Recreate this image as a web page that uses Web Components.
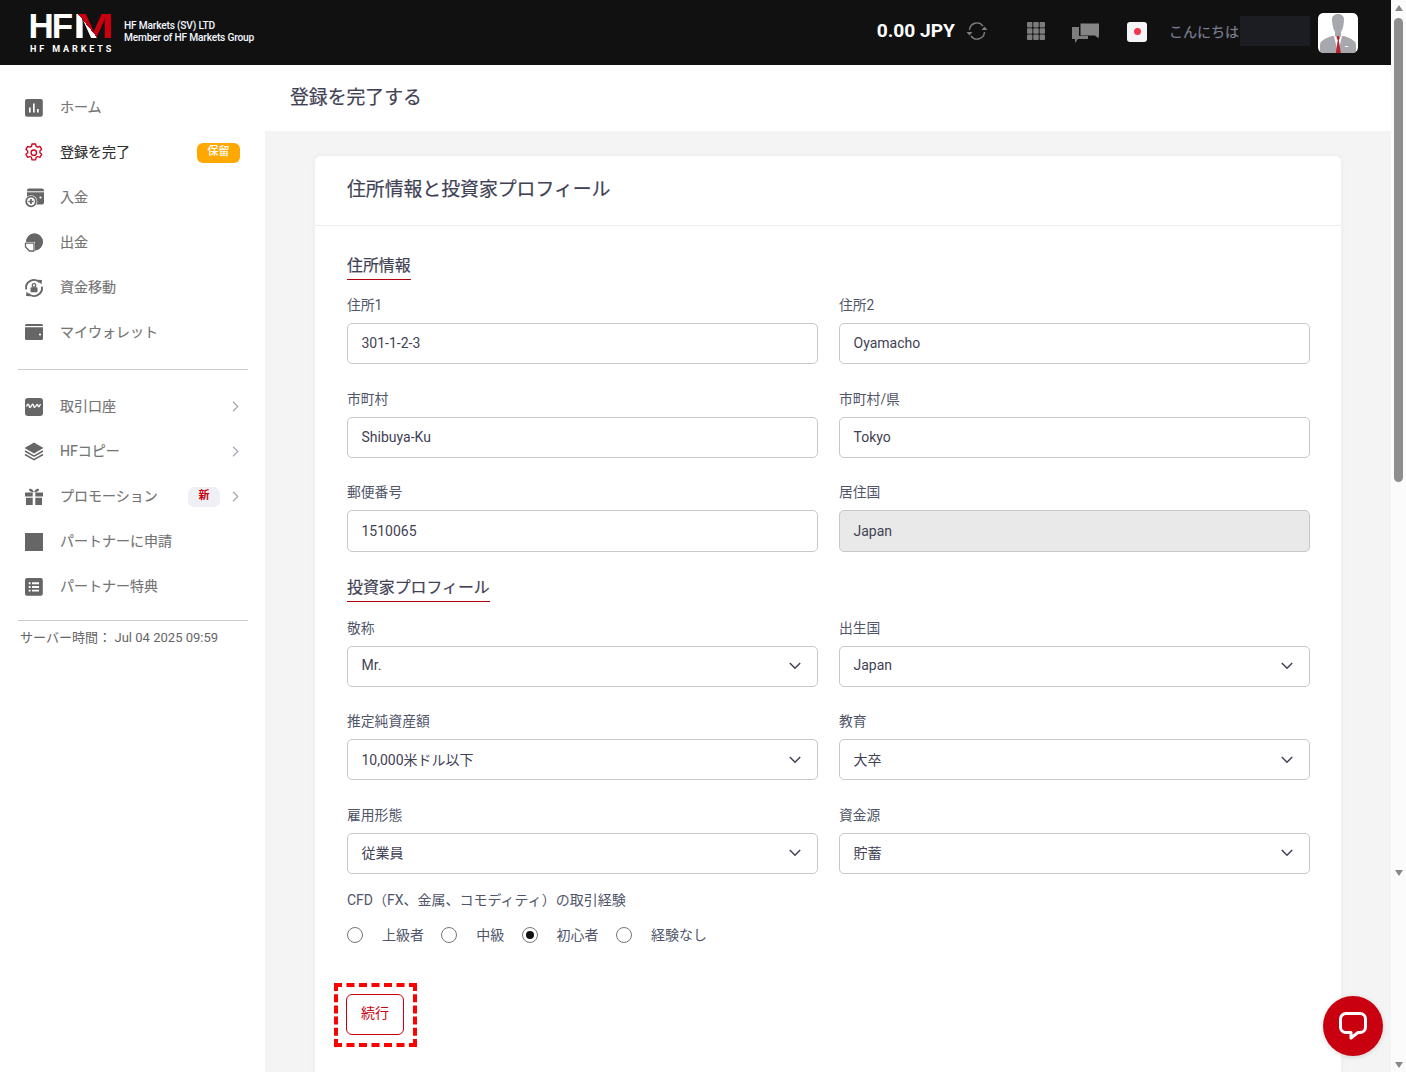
<!DOCTYPE html>
<html lang="ja">
<head>
<meta charset="utf-8">
<title>HFM</title>
<style>
  html, body { margin: 0; height: 1072px; overflow: hidden; }
  body { font-family: Roboto, "Noto Sans CJK JP", sans-serif; font-size: 14px; color: #3f4254; }
  #app { display: flex; width: 1406px; height: 1072px; overflow: hidden; }
  #main { width: 1391px; display: flex; flex-direction: column; }
  #columns { display: flex; flex: 1; min-height: 0; }
</style>
</head>
<body>
<div id="app">
  <div id="main">
    <hf-topbar></hf-topbar>
    <div id="columns">
      <hf-sidenav></hf-sidenav>
      <hf-content>
        <hf-section-title>住所情報</hf-section-title>
        <hf-form-grid>
          <hf-field label="住所1" value="301-1-2-3"></hf-field>
          <hf-field label="住所2" value="Oyamacho"></hf-field>
          <hf-field label="市町村" value="Shibuya-Ku"></hf-field>
          <hf-field label="市町村/県" value="Tokyo"></hf-field>
          <hf-field label="郵便番号" value="1510065"></hf-field>
          <hf-field label="居住国" value="Japan" disabled></hf-field>
        </hf-form-grid>
        <hf-section-title>投資家プロフィール</hf-section-title>
        <hf-form-grid>
          <hf-field label="敬称" value="Mr." select></hf-field>
          <hf-field label="出生国" value="Japan" select></hf-field>
          <hf-field label="推定純資産額" value="10,000米ドル以下" select></hf-field>
          <hf-field label="教育" value="大卒" select></hf-field>
          <hf-field label="雇用形態" value="従業員" select></hf-field>
          <hf-field label="資金源" value="貯蓄" select></hf-field>
        </hf-form-grid>
        <hf-radio-group label="CFD（FX、金属、コモディティ）の取引経験" options="上級者,中級,初心者,経験なし" checked="初心者"></hf-radio-group>
        <hf-submit>続行</hf-submit>
      </hf-content>
    </div>
  </div>
  <hf-scrollbar></hf-scrollbar>
</div>
<hf-chat></hf-chat>

<script>
const ICONS = {
  home: '<rect x="1" y="1" width="17.800" height="17.800" rx="2" fill="#666"/><path d="M5 14.500V9.500h1.700v5zM9 14.500V5.500h1.700v9zM13 14.500v-3.500h1.700v3.500z" fill="#fff"/>',
  gear: '<path d="M8 1h3.600l.5 2.300 1.600.8 2.200-.8 1.800 3-1.800 1.600v1.800l1.800 1.600-1.800 3-2.200-.8-1.600.8-.5 2.500H8l-.5-2.500-1.600-.8-2.200.8-1.800-3 1.800-1.600V7.900L1.900 6.300l1.800-3 2.200.8 1.600-.8z" fill="none" stroke="#d0021b" stroke-width="1.300" stroke-linejoin="round"/><circle cx="9.800" cy="9.700" r="2.700" fill="none" stroke="#d0021b" stroke-width="1.300"/>',
  deposit: '<rect x="3" y=".5" width="17" height="16" rx="2" fill="#666"/><path d="M3 3.800h17" stroke="#fff" stroke-width="1"/><circle cx="16.500" cy="9.500" r="1.100" fill="#fff"/><circle cx="7" cy="13.500" r="6.300" fill="#fff"/><circle cx="7" cy="13.500" r="4.800" fill="#fff" stroke="#666" stroke-width="1.800"/><path d="M4.400 13.500h5.200M7 10.900v5.200" stroke="#666" stroke-width="1.700"/>',
  withdraw: '<circle cx="10.500" cy="9" r="8.500" fill="#666"/><path d="M0 8.800h11V19H0z" fill="#fff"/><path d="M10 10.200v7.800H5.500L1.500 14v-3.800z" fill="#fff" stroke="#666" stroke-width="1.300" stroke-linejoin="round"/><path d="M11 9.800V17.400A8.500 8.500 0 0 0 11 .5 8.500 8.500 0 0 0 2.100 8.800H11z" fill="#666"/>',
  transfer: '<path d="M15.700 4.400A8 8 0 0 0 2.100 11.300M4.300 15.600A8 8 0 0 0 17.900 8.700" fill="none" stroke="#666" stroke-width="1.900"/><path d="M13.500 1.800 18 2l-.6 4.600zM6.500 18.200 2 18l.6-4.600z" fill="#666"/><circle cx="10" cy="7.400" r="1.800" fill="none" stroke="#666" stroke-width="1.300"/><rect x="6.500" y="9.200" width="7" height="5" rx=".8" fill="#666"/>',
  wallet: '<path d="M2.500 1h15A1.500 1.500 0 0 1 19 2.500V3H1v-.5A1.500 1.500 0 0 1 2.500 1z" fill="#666"/><path d="M1 4.300h18v11.200a1.500 1.500 0 0 1-1.500 1.500h-15A1.500 1.500 0 0 1 1 15.500z" fill="#666"/><circle cx="16" cy="11.500" r="1.100" fill="#fff"/>',
  trading: '<rect x="1" y="1" width="18" height="18" rx="3" fill="#666"/><path d="M2.500 9.500c.8-2.500 2-3 2.500-1s.8 2.800 2 .8 1.800-3 2.500-.8.800 2.800 2 1 1.800-3 2.500-1 1 1.500 2.500-1.500" fill="none" stroke="#fff" stroke-width="1.300"/>',
  layers: '<path d="M10 .5 19.500 6 10 11.500.5 6z" fill="#666"/><path d="m1 9 9 5.200L19 9M1 12.500l9 5.200 9-5.200" fill="none" stroke="#666" stroke-width="1.500"/>',
  gift: '<path d="M1 5.500h7.700v4H1zM11.300 5.500H19v4h-7.700zM2 10.700h6.700V18H2zM11.300 10.700H18V18h-6.700z" fill="#666"/><path d="M10 5.200C7.300 5.200 5 4.500 5 2.800S8.300.8 10 5.200zM10 5.200c2.700 0 5-.7 5-2.400S11.700.8 10 5.200z" fill="#666"/>',
  square: '<rect x="1" y="1" width="18" height="18" fill="#666"/>',
  list: '<rect x="1" y="1" width="17.800" height="17.800" rx="2" fill="#666"/><path d="M4.700 5.300h1.900v1.900H4.700zM8 5.300h7v1.900H8zM4.700 9h1.900v1.900H4.700zM8 9h7v1.900H8zM4.700 12.700h1.900v1.900H4.700zM8 12.700h7v1.900H8z" fill="#fff"/>'
};

class HfTopbar extends HTMLElement {
  connectedCallback() {
    this.attachShadow({ mode: 'open' });
    this.shadowRoot.innerHTML = `
    <style>
      :host { display: flex; align-items: center; height: 65px; background: #111; color: #fff; padding: 0 33px 0 30px; box-sizing: border-box; flex: none; }
      .logo { width: 94px; display: flex; flex-direction: column; margin-top: 1px; }
      .mark { font: 700 35px/30px "Liberation Sans", sans-serif; height: 30px; margin-left: -1.500px; white-space: nowrap; display: flex; }
      .mark span { letter-spacing: -2px; }
      .mark b { display: block; width: 29px; height: 30px; margin-left: 2px; transform: scaleX(1.420); transform-origin: left center; background: linear-gradient(60deg, #fff 0 41%, #c8000f 41%); -webkit-background-clip: text; background-clip: text; color: transparent; }
      .sub { font: 700 9px/11px Roboto, sans-serif; letter-spacing: 2.900px; margin-top: 3px; white-space: nowrap; }
      .company { font: 500 10.200px/12px Roboto, sans-serif; letter-spacing: -.2px; margin-top: -1px; white-space: nowrap; color: #f4f8ff; }
      .right { margin-left: auto; display: flex; align-items: center; }
      .balance { font: 700 19.200px/1 Roboto, sans-serif; margin-bottom: 4px; white-space: nowrap; }
      .sync { margin-left: 11px; margin-bottom: 4px; }
      .apps { margin-left: 39px; margin-bottom: 4px; }
      .msg { margin-left: 27px; margin-top: 2px; }
      .flag { margin-left: 28px; width: 20px; height: 20px; margin-bottom: 2px; border-radius: 3px; background: #f5f5f7; display: flex; align-items: center; justify-content: center; }
      .flag i { width: 7px; height: 7px; border-radius: 50%; background: #f4364c; }
      .hello { margin-left: 22px; margin-bottom: 4px; font-size: 14px; color: #7a8094; white-space: nowrap; width: 71px; -webkit-text-stroke: .2px; }
      .mask { width: 70px; height: 30px; margin-bottom: 4px; background: #1b1d22; }
      .avatar { margin-left: 8px; width: 40px; height: 40px; border-radius: 5px; display: block; }
    </style>
    <div class="logo">
      <div class="mark"><span>HF</span><b>M</b></div>
      <div class="sub">HF MARKETS</div>
    </div>
    <div class="company">HF Markets (SV) LTD<br>Member of HF Markets Group</div>
    <div class="right">
      <div class="balance">0.00 JPY</div>
      <svg class="sync" width="22" height="22" viewBox="0 0 22 22" fill="none" stroke="#7d7d7d" stroke-width="1.400"><path d="M3.500 10a7.500 7.500 0 0 1 13.500-4M18.500 12a7.500 7.500 0 0 1-13.500 4"/><path d="M15.500 10h6l-3-3.500zM.5 12h6l-3 3.500z" fill="#7d7d7d" stroke="none"/></svg>
      <svg class="apps" width="18" height="18" viewBox="0 0 18 18" fill="#7d7d7d"><rect width="5.400" height="5.400" rx=".8"/><rect x="6.300" width="5.400" height="5.400" rx=".8"/><rect x="12.600" width="5.400" height="5.400" rx=".8"/><rect y="6.300" width="5.400" height="5.400" rx=".8"/><rect x="6.300" y="6.300" width="5.400" height="5.400" rx=".8"/><rect x="12.600" y="6.300" width="5.400" height="5.400" rx=".8"/><rect y="12.600" width="5.400" height="5.400" rx=".8"/><rect x="6.300" y="12.600" width="5.400" height="5.400" rx=".8"/><rect x="12.600" y="12.600" width="5.400" height="5.400" rx=".8"/></svg>
      <svg class="msg" width="27" height="21" viewBox="0 0 27 21"><path d="M0 4h16v12H6l-3 4v-4H0z" fill="#7d7d7d"/><path d="M7 0h20v13l-1 3-3.500-3H7z" fill="#111"/><path d="M8.500 .5H27v12.300l-.7 2.500-3.300-2.800H8.500z" fill="#858585"/></svg>
      <div class="flag"><i></i></div>
      <div class="hello">こんにちは</div>
      <div class="mask"></div>
      <svg class="avatar" viewBox="0 0 40 40"><rect width="40" height="40" rx="5" fill="#fff"/><path d="M2 40v-8c0-4 4-6 12-9h12c8 3 12 5 12 9v8z" fill="#a6a8ad"/><path d="M14 6c0-3 3-5 6-5s6 2 6 5c0 5-1 10-3 13v4h-6v-4c-2-3-3-8-3-13z" fill="#a6a8ad"/><path d="M16 23l4 17 4-17-4 1z" fill="#fff"/><path d="M18.700 23h2.600l.5 2.500-1 1.500 2 13h-5l2-13-1-1.500z" fill="#b8232f"/><rect x="27" y="33" width="3" height="1" fill="#fff"/></svg>
    </div>`;
  }
}

class HfNavItem extends HTMLElement {
  connectedCallback() {
    this.attachShadow({ mode: 'open' });
    const arrow = this.hasAttribute('arrow')
      ? '<svg class="arrow" width="7" height="11" viewBox="0 0 7 11" fill="none" stroke="#a5a8b3" stroke-width="1.200"><path d="m1 .8 4.800 4.700L1 10.200"/></svg>'
      : '';
    this.shadowRoot.innerHTML = `
    <style>
      :host { display: flex; align-items: center; height: 45px; padding: 0 26px 0 24px; box-sizing: border-box; color: #747474; font-size: 14px; }
      :host([active]) { color: #2e2e2e; }
      svg.icon { width: 20px; height: 20px; flex: none; margin: 3px 16px 0 0; overflow: visible; }
      .text { white-space: nowrap; flex: 1; padding-bottom: 2px; -webkit-text-stroke: .15px; }
      .arrow { flex: none; margin: 2px 0 0 12px; }
    </style>
    <svg class="icon" viewBox="0 0 20 20">${ICONS[this.getAttribute('icon')]}</svg>
    <span class="text">${this.getAttribute('label')}</span>
    <slot></slot>${arrow}`;
  }
}

class HfBadge extends HTMLElement {
  connectedCallback() {
    this.attachShadow({ mode: 'open' });
    this.shadowRoot.innerHTML = `
    <style>
      :host { display: flex; align-items: center; justify-content: center; height: 20px; border-radius: 6px; font-size: 11px; font-weight: 500; padding-bottom: 5px; margin: 2px -1px 0 0; box-sizing: border-box; background: #ffa800; color: #fff; width: 43px; }
      :host([kind="new"]) { background: #eef0f5; color: #c8000f; width: 32px; font-weight: 700; margin-right: 0; }
    </style><slot></slot>`;
  }
}

class HfSidenav extends HTMLElement {
  connectedCallback() {
    this.attachShadow({ mode: 'open' });
    this.shadowRoot.innerHTML = `
    <style>
      :host { display: block; width: 265px; flex: none; background: #fff; padding-top: 19px; box-sizing: border-box; }
      hr { border: 0; border-top: 1px solid #ccc; margin: 0 17px 0 18px; }
      .first { margin-top: 15px; margin-bottom: 13px; }
      .second { margin-top: 12px; }
      .time { margin: 8px 0 0 20px; font-size: 13.050px; line-height: 17px; color: #666; white-space: nowrap; }
    </style>
    <hf-nav-item icon="home" label="ホーム"></hf-nav-item>
    <hf-nav-item icon="gear" label="登録を完了" active><hf-badge>保留</hf-badge></hf-nav-item>
    <hf-nav-item icon="deposit" label="入金"></hf-nav-item>
    <hf-nav-item icon="withdraw" label="出金"></hf-nav-item>
    <hf-nav-item icon="transfer" label="資金移動"></hf-nav-item>
    <hf-nav-item icon="wallet" label="マイウォレット"></hf-nav-item>
    <hr class="first">
    <hf-nav-item icon="trading" label="取引口座" arrow></hf-nav-item>
    <hf-nav-item icon="layers" label="HFコピー" arrow></hf-nav-item>
    <hf-nav-item icon="gift" label="プロモーション" arrow><hf-badge kind="new">新</hf-badge></hf-nav-item>
    <hf-nav-item icon="square" label="パートナーに申請"></hf-nav-item>
    <hf-nav-item icon="list" label="パートナー特典"></hf-nav-item>
    <hr class="second">
    <div class="time">サーバー時間： Jul 04 2025 09:59</div>`;
  }
}

class HfContent extends HTMLElement {
  connectedCallback() {
    this.attachShadow({ mode: 'open' });
    this.shadowRoot.innerHTML = `
    <style>
      :host { display: block; flex: 1; min-width: 0; background: #f4f4f5; overflow: hidden; }
      .bar { height: 66px; background: #fff; padding: 0 0 6px 25px; display: flex; align-items: center; box-sizing: border-box; }
      h3 { margin: 0; font-size: 18.850px; font-weight: 400; color: #3f4254; white-space: nowrap; -webkit-text-stroke: .2px; }
      .card { margin: 25px 50px 0 50px; background: #fff; border-radius: 6px; box-shadow: 0 0 6px rgba(0, 0, 0, .05); height: 1000px; }
      .head { height: 70px; box-sizing: border-box; border-bottom: 1px solid #ececec; padding: 0 0 6px 32px; display: flex; align-items: center; }
      .body { padding: 27px 31px 0 32px; }
    </style>
    <div class="bar"><h3>登録を完了する</h3></div>
    <div class="card">
      <div class="head"><h3>住所情報と投資家プロフィール</h3></div>
      <div class="body"><slot></slot></div>
    </div>`;
  }
}

class HfSectionTitle extends HTMLElement {
  connectedCallback() {
    this.attachShadow({ mode: 'open' });
    this.shadowRoot.innerHTML = `
    <style>
      :host { display: block; margin-bottom: 15px; }
      span { display: inline-block; font-size: 15.900px; line-height: 22px; padding: 1.500px 0 2.500px; border-bottom: 1px solid #b00010; color: #3f4254; vertical-align: top; -webkit-text-stroke: .2px; }
    </style><span><slot></slot></span>`;
  }
}

class HfFormGrid extends HTMLElement {
  connectedCallback() {
    this.attachShadow({ mode: 'open' });
    this.shadowRoot.innerHTML = `
    <style>
      :host { display: grid; grid-template-columns: 471px 471px; column-gap: 21px; row-gap: 24.200px; margin-bottom: 23.500px; }
      :host(:last-of-type) { padding-top: .500px; margin-bottom: 16px; }
    </style><slot></slot>`;
  }
}

class HfField extends HTMLElement {
  connectedCallback() {
    this.attachShadow({ mode: 'open' });
    const chevron = this.hasAttribute('select')
      ? '<svg width="12" height="8" viewBox="0 0 12 8" fill="none" stroke="#3f4254" stroke-width="1.500"><path d="m.8 1 5.200 5.200L11.200 1"/></svg>'
      : '';
    this.shadowRoot.innerHTML = `
    <style>
      :host { display: block; }
      :host([select]) { padding-bottom: .300px; }
      label { display: block; font-size: 13.800px; line-height: 21px; margin-bottom: 7.100px; color: #50556a; }
      .box { height: 41.300px; box-sizing: border-box; border: 1px solid #c8c8c8; border-radius: 5px; background: #fff; display: flex; align-items: center; justify-content: space-between; padding: 0 16px 0 13.500px; font-size: 14px; color: #3f4254; }
      :host([select]) .box { height: 41px; }
      :host([disabled]) .box { background: #e9e9e9; }
      span { padding-bottom: .500px; }
      :host([select]) span { padding-bottom: 2px; }
    </style>
    <label>${this.getAttribute('label')}</label>
    <div class="box"><span>${this.getAttribute('value')}</span>${chevron}</div>`;
  }
}

class HfRadioGroup extends HTMLElement {
  connectedCallback() {
    this.attachShadow({ mode: 'open' });
    const checked = this.getAttribute('checked');
    const items = this.getAttribute('options').split(',').map(name => `
      <div class="opt"><i class="${name === checked ? 'on' : ''}"></i><span>${name}</span></div>`).join('');
    this.shadowRoot.innerHTML = `
    <style>
      :host { display: block; }
      .title { font-size: 14px; line-height: 21px; color: #50556a; white-space: nowrap; }
      .row { display: flex; margin-top: 13.500px; height: 21px; align-items: center; }
      .opt { display: flex; align-items: center; margin-right: 17.300px; }
      i { width: 16px; height: 16px; box-sizing: border-box; border: 1px solid #767676; border-radius: 50%; margin-right: 19px; display: flex; align-items: center; justify-content: center; }
      i.on::after { content: ""; width: 8px; height: 8px; border-radius: 50%; background: #111; }
      span { font-size: 14px; color: #50556a; white-space: nowrap; padding-bottom: 2px; }
    </style>
    <div class="title">${this.getAttribute('label')}</div>
    <div class="row">${items}</div>`;
  }
}

class HfSubmit extends HTMLElement {
  connectedCallback() {
    this.attachShadow({ mode: 'open' });
    this.shadowRoot.innerHTML = `
    <style>
      :host { display: block; margin: 37.300px 0 0 -13px; width: 83px; height: 64px; box-sizing: border-box; border: 4px dashed #ff0000; padding: 7px 0 0 8px; }
      button { display: block; width: 58px; height: 41px; background: #fff; border: 1px solid #c8000f; border-radius: 6px; padding: 0 0 4px; font: 14px Roboto, "Noto Sans CJK JP", sans-serif; color: #c8000f; }
    </style>
    <button type="button"><slot></slot></button>`;
  }
}

class HfScrollbar extends HTMLElement {
  connectedCallback() {
    this.attachShadow({ mode: 'open' });
    this.shadowRoot.innerHTML = `
    <style>
      :host { display: flex; flex-direction: column; align-items: center; width: 15px; height: 1072px; background: #fbfbfb; flex: none; }
      .up { width: 0; height: 0; border: 4.500px solid transparent; border-top: 0; border-bottom: 6px solid #888; margin-top: 5px; }
      .thumb { width: 9px; height: 464px; background: #8e8e8e; border-radius: 4.500px; margin-top: 7px; }
      .down { width: 0; height: 0; border: 4.500px solid transparent; border-bottom: 0; border-top: 6px solid #888; }
      .d1 { margin-top: 388px; }
      .d2 { margin-top: 186px; }
    </style>
    <div class="up"></div>
    <div class="thumb"></div>
    <div class="down d1"></div>
    <div class="down d2"></div>`;
  }
}

class HfChat extends HTMLElement {
  connectedCallback() {
    this.attachShadow({ mode: 'open' });
    this.shadowRoot.innerHTML = `
    <style>
      :host { position: fixed; left: 1323px; top: 996px; width: 60px; height: 60px; border-radius: 50%; background: #c8000f; display: flex; align-items: center; justify-content: center; box-shadow: 0 1px 5px rgba(0, 0, 0, .15); }
    </style>
    <svg width="28" height="28" viewBox="0 0 28 28"><path d="M7 1.500h14a5.500 5.500 0 0 1 5.500 5.500v8a5.500 5.500 0 0 1-5.500 5.500h-2l-7 5.500v-5.500H7A5.500 5.500 0 0 1 1.500 15V7A5.500 5.500 0 0 1 7 1.500z" fill="none" stroke="#fff" stroke-width="3" stroke-linejoin="round"/></svg>`;
  }
}

customElements.define('hf-topbar', HfTopbar);
customElements.define('hf-nav-item', HfNavItem);
customElements.define('hf-badge', HfBadge);
customElements.define('hf-sidenav', HfSidenav);
customElements.define('hf-content', HfContent);
customElements.define('hf-section-title', HfSectionTitle);
customElements.define('hf-form-grid', HfFormGrid);
customElements.define('hf-field', HfField);
customElements.define('hf-radio-group', HfRadioGroup);
customElements.define('hf-submit', HfSubmit);
customElements.define('hf-scrollbar', HfScrollbar);
customElements.define('hf-chat', HfChat);
</script>
</body>
</html>
